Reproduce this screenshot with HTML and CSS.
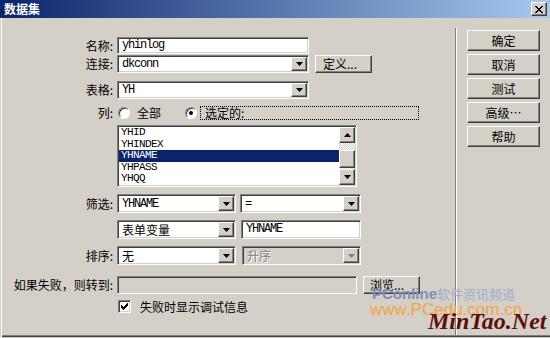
FILE: index.html
```html
<!DOCTYPE html>
<html lang="zh">
<head>
<meta charset="utf-8">
<link rel="stylesheet" href="styles.css">
</head>
<body>
<div class="window">
  <div class="titlebar">
    <span class="title">数据集</span>
    <span class="close raised"><svg width="8" height="7" viewBox="0 0 8 7" shape-rendering="crispEdges"><path d="M0 0h2v1h-2zM6 0h2v1h-2zM1 1h2v1h-2zM5 1h2v1h-2zM2 2h4v1h-4zM3 3h2v1h-2zM2 4h4v1h-4zM1 5h2v1h-2zM5 5h2v1h-2zM0 6h2v1h-2zM6 6h2v1h-2z" fill="#000"/></svg></span>
  </div>
  <div class="body">
    <div class="form">
      <div class="row r1">
        <span class="lbl">名称:</span>
        <div class="sunken text w192 mono">yhinlog</div>
      </div>
      <div class="row r2">
        <span class="lbl">连接:</span>
        <div class="sunken combo w192"><span class="val mono">dkconn</span><span class="arrow raised"><svg width="7" height="4" viewBox="0 0 7 4"><polygon points="0,0 7,0 3.5,4" fill="#000"/></svg></span></div>
        <div class="raised btn def">定义...</div>
      </div>
      <div class="row r3">
        <span class="lbl">表格:</span>
        <div class="sunken combo w192"><span class="val mono">YH</span><span class="arrow raised"><svg width="7" height="4" viewBox="0 0 7 4"><polygon points="0,0 7,0 3.5,4" fill="#000"/></svg></span></div>
      </div>
      <div class="row r4">
        <span class="lbl">列:</span>
        <span class="radio"></span>
        <span class="rtext">全部</span>
        <span class="radio on"><span class="dot"></span></span>
        <span class="focus">选定的:</span>
      </div>
      <div class="row r5">
        <span class="lbl"></span>
        <div class="sunken list">
          <div class="items">
            <div class="item">YHID</div>
            <div class="item">YHINDEX</div>
            <div class="item sel">YHNAME</div>
            <div class="item">YHPASS</div>
            <div class="item">YHQQ</div>
          </div>
          <div class="scroll">
            <span class="sbtn raised"><svg width="7" height="4" viewBox="0 0 7 4"><polygon points="0,4 7,4 3.5,0" fill="#000"/></svg></span>
            <div class="track"><div class="thumb raised"></div></div>
            <span class="sbtn raised"><svg width="7" height="4" viewBox="0 0 7 4"><polygon points="0,0 7,0 3.5,4" fill="#000"/></svg></span>
          </div>
        </div>
      </div>
      <div class="row r6">
        <span class="lbl">筛选:</span>
        <div class="sunken combo w119"><span class="val mono">YHNAME</span><span class="arrow raised"><svg width="7" height="4" viewBox="0 0 7 4"><polygon points="0,0 7,0 3.5,4" fill="#000"/></svg></span></div>
        <div class="sunken combo w121 g4"><span class="val mono">=</span><span class="arrow raised"><svg width="7" height="4" viewBox="0 0 7 4"><polygon points="0,0 7,0 3.5,4" fill="#000"/></svg></span></div>
      </div>
      <div class="row r7">
        <span class="lbl"></span>
        <div class="sunken combo w119"><span class="val">表单变量</span><span class="arrow raised"><svg width="7" height="4" viewBox="0 0 7 4"><polygon points="0,0 7,0 3.5,4" fill="#000"/></svg></span></div>
        <div class="sunken text w120 g5 mono">YHNAME</div>
      </div>
      <div class="row r8">
        <span class="lbl">排序:</span>
        <div class="sunken combo w119"><span class="val">无</span><span class="arrow raised"><svg width="7" height="4" viewBox="0 0 7 4"><polygon points="0,0 7,0 3.5,4" fill="#000"/></svg></span></div>
        <div class="sunken combo disabled w119 g6"><span class="val">升序</span><span class="arrow raised"><svg width="7" height="4" viewBox="0 0 7 4"><polygon points="0,0 7,0 3.5,4" fill="#808080"/></svg></span></div>
      </div>
      <div class="row r9">
        <span class="lbl">如果失败，则转到:</span>
        <div class="sunken text disabled w240"></div>
        <div class="raised btn browse">浏览...</div>
      </div>
      <div class="row r10">
        <span class="lbl"></span>
        <span class="check sunken"><svg width="7" height="7" viewBox="0 0 7 7" shape-rendering="crispEdges"><path d="M0 2h1v3h-1zM1 3h1v3h-1zM2 4h1v3h-1zM3 3h1v3h-1zM4 2h1v3h-1zM5 1h1v3h-1zM6 0h1v3h-1z" fill="#000"/></svg></span>
        <span class="ctext">失败时显示调试信息</span>
      </div>
    </div>
    <div class="sep"></div>
    <div class="buttons">
      <div class="raised btn side">确定</div>
      <div class="raised btn side">取消</div>
      <div class="raised btn side">测试</div>
      <div class="raised btn side">高级…</div>
      <div class="raised btn side">帮助</div>
    </div>
  </div>
  <div class="wm wm1"><b>PConline</b>软件资讯频道</div>
  <div class="wm wm2">www.PCedu.com.cn</div>
  <div class="wm wm3">MinTao.Net</div>
</div>
</body>
</html>
```

FILE: styles.css
```css
* { box-sizing: border-box; }
html, body { margin: 0; padding: 0; }
body {
  width: 550px; height: 338px; overflow: hidden;
  background: #d4d0c8;
  font-family: "Noto Sans CJK SC", sans-serif;
  font-size: 12px; color: #000;
}
.window {
  width: 550px; height: 338px;
  display: flex; flex-direction: column;
  position: relative; background: #d4d0c8;
}
.titlebar {
  height: 18px; flex: none;
  background: linear-gradient(to right, #0a246a, #a6caf0);
  display: flex; align-items: center; justify-content: space-between;
  padding: 0 3px 0 4px;
}
.title { color: #fff; font-weight: bold; font-size: 12px; line-height: 14px; }
.close { width: 16px; height: 14px; display: flex; align-items: center; justify-content: center; }

.raised {
  background: #d4d0c8;
  border: 1px solid; border-color: #fff #404040 #404040 #fff;
  box-shadow: inset -1px -1px #808080;
}
.sunken {
  background: #fff;
  border: 1px solid; border-color: #808080 #fff #fff #808080;
  box-shadow: inset 1px 1px #404040, inset -1px -1px #d4d0c8;
}
.mono { font-family: "Liberation Mono", "DejaVu Sans Mono", monospace; font-size: 12px; letter-spacing: -1.2px; }

.body {
  flex: 1; display: flex;
  border-left: 1px solid #d4d0c8;
  box-shadow: inset 1px 0 #fff, inset 0 -1px #d4d0c8, inset 0 -2px #404040, inset 0 -3px #808080;
}
.form { width: 454px; flex: none; padding-top: 19px; }
.row { display: flex; align-items: center; }
.lbl { width: 112px; margin-right: 4px; flex: none; text-align: right; line-height: 16px; white-space: nowrap; }

.text { height: 100%; padding-left: 4px; line-height: 13px; display: flex; align-items: center; }
.combo { height: 100%; padding: 1px; display: flex; }
.combo .val { flex: 1; padding-left: 3px; display: flex; align-items: center; line-height: 14px; }
.combo .arrow { width: 16px; flex: none; display: flex; align-items: center; justify-content: center; }
.disabled { background: #d4d0c8; }
.disabled .val { color: #808080; text-shadow: 1px 1px #fff; }

.w192 { width: 192px; }
.w119 { width: 119px; }
.w120 { width: 120px; }
.w121 { width: 121px; }
.w240 { width: 240px; }
.g4 { margin-left: 4px; }
.g5 { margin-left: 5px; }
.g6 { margin-left: 6px; }

.btn { display: flex; align-items: center; justify-content: center; line-height: 14px; }
.def { width: 57px; height: 18px; margin-left: 6px; justify-content: flex-start; padding-left: 7px; }
.browse { width: 57px; height: 18px; margin-left: 6px; justify-content: flex-start; padding-left: 6px; }

.r1 { height: 17px; }
.r2 { height: 18px; margin-top: 1px; }
.r3 { height: 18px; margin-top: 8px; }
.r4 { height: 14px; margin-top: 7px; }
.r5 { height: 62px; margin-top: 5px; }
.r6 { height: 19px; margin-top: 7px; }
.r7 { height: 19px; margin-top: 7px; }
.r8 { height: 19px; margin-top: 7px; }
.r9 { height: 18px; margin-top: 11px; }
.r10 { height: 13px; margin-top: 6px; }

.radio {
  width: 12px; height: 12px; flex: none; border-radius: 50%;
  background: #fff; margin-left: 1px;
  border: 1px solid; border-color: #808080 #fff #fff #808080;
  box-shadow: inset 1px 1px #404040;
  display: flex; align-items: center; justify-content: center;
}
.radio.on { margin-left: 24px; }
.dot { width: 4px; height: 4px; border-radius: 50%; background: #000; }
.rtext { margin-left: 7px; line-height: 14px; }
.focus {
  margin-left: 3px; width: 219px; height: 14px;
  border: 1px dotted #000; padding-left: 4px; line-height: 12px;
}

.list { width: 240px; height: 62px; padding: 1px; display: flex; }
.items {
  flex: 1; overflow: hidden;
  font-family: "Liberation Mono", "DejaVu Sans Mono", monospace;
  font-size: 11px; letter-spacing: -0.6px;
}
.item { height: 11.6px; line-height: 11.6px; padding-left: 2px; white-space: nowrap; }
.item.sel { background: #0a246a; color: #fff; }
.scroll { width: 16px; flex: none; display: flex; flex-direction: column; }
.sbtn { height: 16px; flex: none; display: flex; align-items: center; justify-content: center; }
.track {
  flex: 1; padding-top: 7px;
  background: repeating-conic-gradient(#fff 0 25%, #d4d0c8 0 50%) 0 0 / 2px 2px;
}
.thumb { height: 18px; }

.check { width: 13px; height: 13px; margin-left: 1px; display: flex; align-items: center; justify-content: center; flex: none; }
.ctext { margin-left: 9px; line-height: 14px; }

.sep { width: 2px; flex: none; margin-top: 10px; margin-bottom: 3px; border-left: 1px solid #808080; border-right: 1px solid #fff; }
.buttons { margin-left: 10px; padding-top: 12px; display: flex; flex-direction: column; gap: 3px; }
.side { width: 73px; height: 21px; }

.wm { position: absolute; white-space: nowrap; }
.wm1 { left: 372px; top: 286px; font-size: 13px; line-height: 16px; color: #a3acc8; }
.wm1 b { font-family: "Liberation Sans", sans-serif; font-size: 15px; font-weight: bold; color: #7f8fb8; }
.wm2 { left: 370px; top: 301px; font-family: "Liberation Sans", sans-serif; font-size: 17px; line-height: 18px; color: #f2a545; }
.wm3 { left: 428px; top: 307px; font-family: "Liberation Serif", serif; font-style: italic; font-weight: bold; font-size: 24px; line-height: 28px; color: #5e0e0c; }
```
